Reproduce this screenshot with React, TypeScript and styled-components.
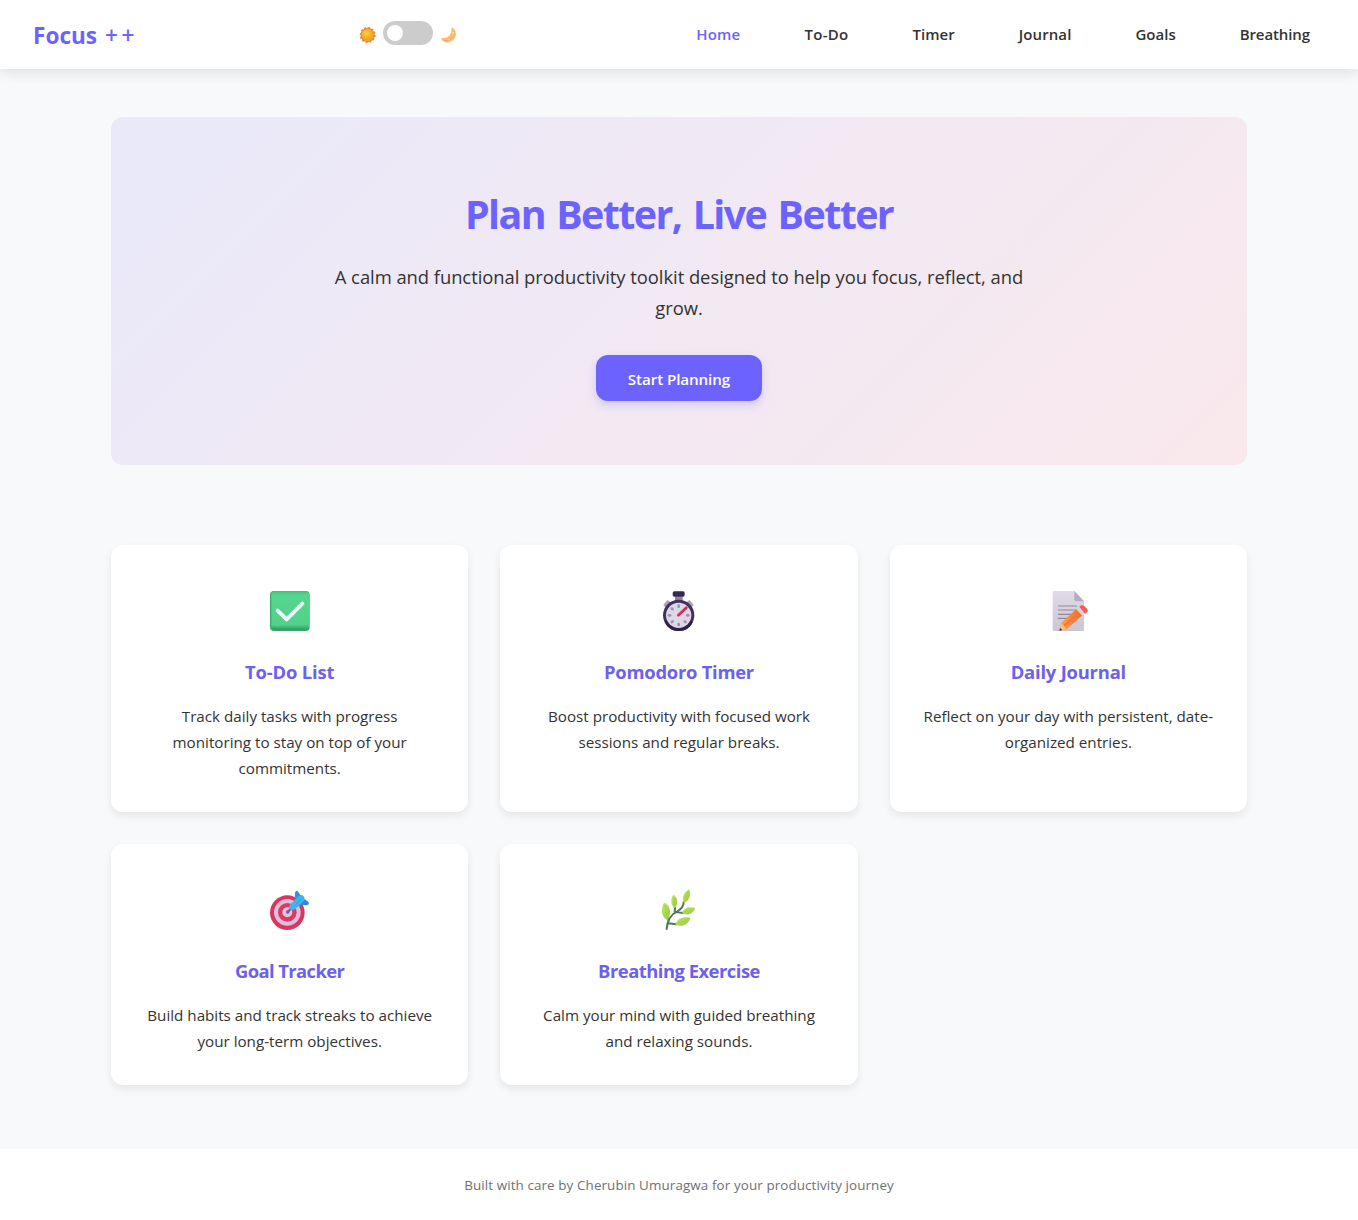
import React from "react";
import styled, { createGlobalStyle } from "styled-components";

const GlobalStyle = createGlobalStyle`
  * { box-sizing: border-box; margin: 0; padding: 0; }
  body {
    background: #f8f9fb;
    color: #333;
    font-family: "Segoe UI", "Open Sans", "Noto Sans", sans-serif;
    font-size: 15.2px;
    line-height: 26px;
  }
`;

const Header = styled.header`
  position: relative;
  height: 69px;
  padding: 0 32px;
  display: flex;
  align-items: center;
  justify-content: space-between;
  background: #fff;
  box-shadow: 0 4px 12px rgba(0, 0, 0, 0.1);
`;

const Logo = styled.div`
  display: flex;
  gap: 8px;
  width: 104px;
  padding: 3px 0 0 1px;
  font-size: 22.6px;
  font-weight: 700;
  color: #6c63ff;
`;

const Pluses = styled.span`
  font-weight: 600;
  letter-spacing: 3.5px;
`;

const ThemeSwitch = styled.div`
  display: flex;
  align-items: center;
  gap: 7px;
  height: 24px;
  margin-bottom: 3px;
  svg { margin-top: 3px; }
`;

const Track = styled.button`
  width: 50px;
  height: 24px;
  padding: 4px;
  border: 0;
  border-radius: 24px;
  background: #ccc;
`;

const Knob = styled.span`
  display: block;
  width: 16px;
  height: 16px;
  border-radius: 50%;
  background: #fff;
`;

const Nav = styled.nav`
  display: flex;
  gap: 32px;
  margin-bottom: 2px;
`;

const NavLink = styled.a<{ $active?: boolean; $tracking: number }>`
  padding: 0 16px;
  font-weight: 600;
  font-size: 15px;
  letter-spacing: ${(p) => p.$tracking}px;
  white-space: nowrap;
  color: ${(p) => (p.$active ? "#6c63ff" : "#333")};
`;

const Main = styled.main`
  width: 1200px;
  margin: 0 auto;
  padding: 48px 32px 64px;
`;

const Hero = styled.section`
  height: 348px;
  padding: 64px 32px;
  display: flex;
  flex-direction: column;
  align-items: center;
  text-align: center;
  border-radius: 12px;
  background: linear-gradient(135deg, #e9e9fa 0%, #f9e8ec 100%);
`;

const HeroTitle = styled.h1`
  margin-bottom: 17px;
  padding-top: 1px;
  height: 64px;
  font-size: 39.4px;
  line-height: 64px;
  letter-spacing: -1.6px;
  word-spacing: 2.7px;
  color: #6c63ff;
`;

const HeroText = styled.p`
  margin-bottom: 32px;
  font-size: 18.4px;
  line-height: 30.72px;
  letter-spacing: -0.04px;
`;

const Button = styled.button`
  width: 166px;
  height: 46px;
  padding-top: 2px;
  border: 0;
  border-radius: 12px;
  font: inherit;
  font-size: 15.2px;
  font-weight: 600;
  letter-spacing: -0.1px;
  color: #fff;
  background: #6c63ff;
  box-shadow: 0 4px 8px rgba(108, 99, 255, 0.25);
`;

const Features = styled.section`
  margin-top: 80px;
  display: grid;
  grid-template-columns: repeat(3, 1fr);
  gap: 32px;
`;

const Card = styled.article`
  padding: 32px 16px 31.3px;
  text-align: center;
  border-radius: 12px;
  background: #fff;
  box-shadow: 0 4px 8px rgba(0, 0, 0, 0.08);
`;

const IconBox = styled.div`
  height: 64px;
  margin-bottom: 16px;
  display: flex;
  align-items: center;
  justify-content: center;
`;

const CardTitle = styled.h2<{ $tracking: number }>`
  margin-bottom: 15px;
  font-size: 18.4px;
  line-height: 30.72px;
  letter-spacing: ${(p) => p.$tracking}px;
  color: #6c60ee;
`;

const CardText = styled.p`
  white-space: pre-line;
`;

const Footer = styled.footer`
  height: 71px;
  padding: 24px;
  text-align: center;
  font-size: 13.4px;
  line-height: 24px;
  letter-spacing: 0.11px;
  color: #6e7175;
  background: #fff;
`;

const SunIcon = () => (
  <svg width="17" height="18" viewBox="0 0 51 54">
    <defs>
      <radialGradient id="sun" cx=".4" cy=".35"><stop offset="0" stopColor="#fccf3c" /><stop offset="1" stopColor="#efa722" /></radialGradient>
    </defs>
    <circle cx="26" cy="27" r="21.5" fill="#e8883e" stroke="#e8883e" strokeWidth="5" strokeDasharray="6 5.25" />
    <circle cx="26" cy="27" r="18.5" fill="url(#sun)" />
  </svg>
);

const MoonIcon = () => (
  <svg width="17" height="18" viewBox="0 0 51 54">
    <path d="M36 4C48 12 52 26 43 38C33 51 14 54 4 40C4 36 8 34 11 36C24 37 35 26 35 6Z" fill="#f8bd72" />
    <path d="M5 40C17 46 32 41 40 29C38 44 15 53 5 40Z" fill="#ed9851" opacity=".55" />
    <circle cx="39" cy="20" r="3" fill="#ffdb91" /><circle cx="28" cy="41" r="3" fill="#ffd68b" />
  </svg>
);

const CheckIcon = () => (
  <svg width="60" height="60" viewBox="0 -3 180 180">
    <defs>
      <linearGradient id="chk" x2="0" y2="1"><stop offset="0" stopColor="#48c67e" /><stop offset=".1" stopColor="#55d58e" /><stop offset=".86" stopColor="#53d18a" /><stop offset="1" stopColor="#329661" /></linearGradient>
    </defs>
    <rect x="30" y="33" width="119" height="120" rx="12" fill="#3eaa70" />
    <rect x="34" y="34" width="113" height="116" rx="9" fill="url(#chk)" />
    <path d="M53 92L80 118L127 71" fill="none" stroke="#f5f3fd" strokeWidth="12" strokeLinecap="round" strokeLinejoin="round" />
  </svg>
);

const TimerIcon = () => (
  <svg width="60" height="60" viewBox="-3 -3 180 180">
    <path d="M40 75L52 60L65 69L50 87ZM131 75L119 60L106 69L121 87Z" fill="#aaa5b2" />
    <rect x="75" y="49" width="23" height="14" fill="#8d8798" />
    <rect x="68" y="34" width="36" height="16" rx="5" fill="#392653" />
    <circle cx="86" cy="106" r="47" fill="#42305f" />
    <path d="M44 126A47 47 0 0 0 129 126L122 121H50Z" fill="#32204c" />
    <circle cx="86" cy="106" r="38" fill="#ded7e8" />
    <g fill="#9c94a9">
      {[0, 45, 90, 135, 180, 225, 270, 315].map((a) => (
        <rect key={a} x="82" y="73" width="8" height="11" rx="4" transform={`rotate(${a} 86 106)`} />
      ))}
    </g>
    <path d="M85 106L109 83" stroke="#d92b5c" strokeWidth="8" strokeLinecap="round" />
  </svg>
);

const JournalIcon = () => (
  <svg width="60" height="60" viewBox="-5 -3 180 180">
    <defs>
      <linearGradient id="page" x2="0" y2="1"><stop offset="0" stopColor="#e0d9e8" /><stop offset="1" stopColor="#cbc5d4" /></linearGradient>
      <linearGradient id="pencil" x2="1"><stop offset="0" stopColor="#ffa34d" /><stop offset="1" stopColor="#f06a2f" /></linearGradient>
    </defs>
    <path d="M39 37Q39 33 43 33H104L133 64V149Q133 153 129 153H43Q39 153 39 149Z" fill="url(#page)" />
    <path d="M104 33V58Q104 64 110 64H133Z" fill="#b4adc0" />
    <path d="M55 78H112M55 90H112M55 103H103M55 115H84" stroke="#92899e" strokeWidth="3.5" />
    <path d="M60 151L65 128L110 87L128 106L79 149Z" fill="url(#pencil)" />
    <path d="M73 137L119 98" stroke="#f0782f" strokeWidth="6" />
    <path d="M60 151L64 131Q74 134 79 149Z" fill="#f8bf7c" />
    <path d="M59 153L61 144L68 150Z" fill="#4c3042" />
    <path d="M110 88L119 80L137 99L128 107Z" fill="#d9d1e1" />
    <path d="M119 80L125 76Q130 74 135 79L143 88Q147 94 142 97L136 101Z" fill="#f35d4e" />
  </svg>
);

const TargetIcon = () => (
  <svg width="60" height="60" viewBox="-1 -6 180 180">
    <circle cx="81" cy="98" r="52" fill="#d83561" />
    <circle cx="81" cy="97" r="40" fill="#ddc0d8" />
    <circle cx="81" cy="97" r="28" fill="#dc3966" />
    <circle cx="81" cy="97" r="15" fill="#dfc9df" />
    <circle cx="82" cy="96" r="6" fill="#b56c96" />
    <path d="M82 96L103 75" stroke="#765d87" strokeWidth="7" strokeLinecap="round" />
    <path d="M103 60L104 38Q106 31 111 32L121 46L119 58L108 70Z" fill="#2f94d9" />
    <path d="M110 80L122 75L139 76Q148 74 145 67L134 58L123 59Z" fill="#2f8ad2" />
    <path d="M86 83Q85 77 92 71L116 48Q123 42 130 49Q136 57 128 65L105 87Q92 94 86 83Z" fill="#42b3f2" />
    <path d="M106 74L123 57" stroke="#2f9be2" strokeWidth="3" />
  </svg>
);

const LeafIcon = () => (
  <svg width="60" height="60" viewBox="-3 -6 180 180">
    <defs>
      <linearGradient id="leaf" x2="1" y2="1"><stop offset="0" stopColor="#c7e65c" /><stop offset="1" stopColor="#8fca45" /></linearGradient>
    </defs>
    <path d="M50 147Q53 107 82 94Q100 84 101 67M56 124L53 116M55 130L78 133M74 99L75 83M80 96L99 99" fill="none" stroke="#4e7a53" strokeWidth="6" strokeLinecap="round" />
    <g fill="url(#leaf)">
      <path d="M53 121C32 110 32 86 42 68C55 72 60 84 61 100Z" />
      <path d="M74 85C61 74 61 55 70 44C82 50 87 71 74 85Z" />
      <path d="M102 69C94 49 103 37 117 28C123 42 120 62 102 69Z" />
      <path d="M96 99C101 83 118 78 135 84C131 101 112 109 96 99Z" />
      <path d="M76 134C81 116 98 109 121 113C118 132 95 143 76 134Z" />
    </g>
    <path d="M44 75Q47 98 53 114M72 51L74 78M114 37L104 64M103 96L127 87M84 130L113 118" fill="none" stroke="#a1cf45" strokeWidth="2" />
  </svg>
);

const links = [
  { label: "Home", active: true, tracking: 0.2 },
  { label: "To-Do", tracking: 0.3 },
  { label: "Timer", tracking: 0 },
  { label: "Journal", tracking: 0.1 },
  { label: "Goals", tracking: 0 },
  { label: "Breathing", tracking: -0.1 },
];

const features = [
  { icon: <CheckIcon />, title: "To-Do List", tracking: -0.15, lines: ["Track daily tasks with progress", "monitoring to stay on top of your", "commitments."] },
  { icon: <TimerIcon />, title: "Pomodoro Timer", tracking: -0.25, lines: ["Boost productivity with focused work", "sessions and regular breaks."] },
  { icon: <JournalIcon />, title: "Daily Journal", tracking: -0.2, lines: ["Reflect on your day with persistent, date-", "organized entries."] },
  { icon: <TargetIcon />, title: "Goal Tracker", tracking: -0.6, lines: ["Build habits and track streaks to achieve", "your long-term objectives."] },
  { icon: <LeafIcon />, title: "Breathing Exercise", tracking: -0.5, lines: ["Calm your mind with guided breathing", "and relaxing sounds."] },
];

export default function App() {
  return (
    <>
      <GlobalStyle />
      <Header>
        <Logo>Focus <Pluses>++</Pluses></Logo>
        <ThemeSwitch>
          <SunIcon />
          <Track aria-label="Toggle theme"><Knob /></Track>
          <MoonIcon />
        </ThemeSwitch>
        <Nav>
          {links.map((l) => (
            <NavLink key={l.label} $active={l.active} $tracking={l.tracking}>{l.label}</NavLink>
          ))}
        </Nav>
      </Header>
      <Main>
        <Hero>
          <HeroTitle>Plan Better, Live Better</HeroTitle>
          <HeroText>
            A calm and functional productivity toolkit designed to help you focus, reflect, and
            <br />
            grow.
          </HeroText>
          <Button>Start Planning</Button>
        </Hero>
        <Features>
          {features.map((f) => (
            <Card key={f.title}>
              <IconBox>{f.icon}</IconBox>
              <CardTitle $tracking={f.tracking}>{f.title}</CardTitle>
              <CardText>{f.lines.join("\n")}</CardText>
            </Card>
          ))}
        </Features>
      </Main>
      <Footer>Built with care by Cherubin Umuragwa for your productivity journey</Footer>
    </>
  );
}
